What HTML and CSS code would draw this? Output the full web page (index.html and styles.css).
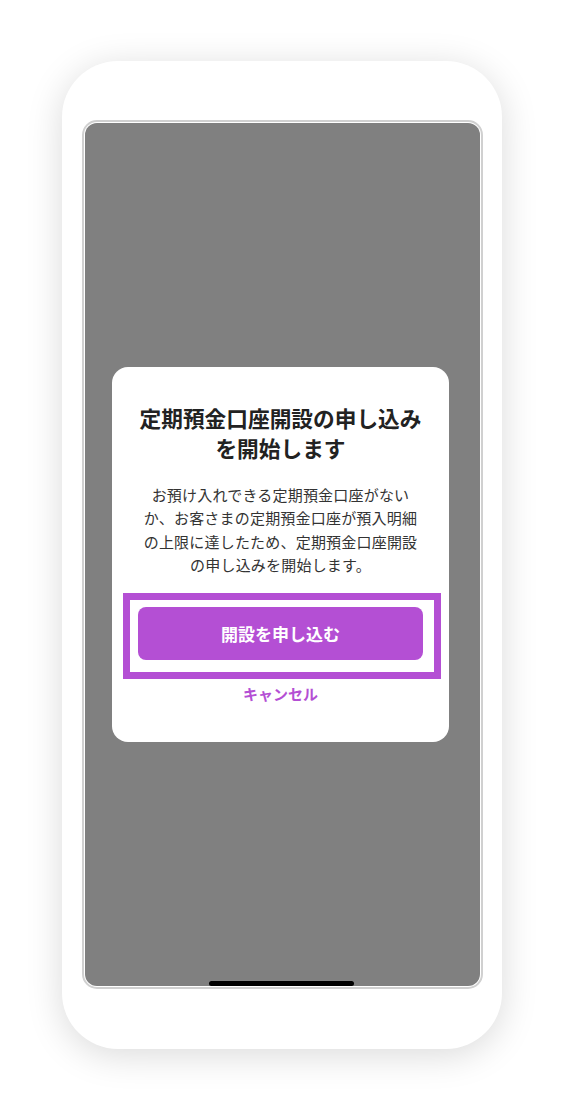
FILE: index.html
```html
<!DOCTYPE html>
<html lang="ja">
<head>
<meta charset="utf-8">
<title>定期預金口座開設</title>
<link rel="stylesheet" href="styles.css">
</head>
<body>
<div class="phone">
  <div class="bezel">
    <div class="screen">
      <div class="dialog">
        <h1 class="title">定期預金口座開設の申し込みを開始します</h1>
        <p class="message">お預け入れできる定期預金口座がないか、お客さまの定期預金口座が預入明細の上限に達したため、定期預金口座開設の申し込みを開始します。</p>
        <div class="highlight">
          <button class="primary">開設を申し込む</button>
        </div>
        <button class="cancel">キャンセル</button>
      </div>
      <div class="home-indicator"></div>
    </div>
  </div>
</div>
</body>
</html>
```

FILE: styles.css
```css
* { box-sizing: border-box; }
html, body { margin: 0; padding: 0; background: #ffffff; }
body {
  font-family: "Noto Sans CJK JP", "Noto Sans", sans-serif;
  padding: 61px 0 60px 62px;
  min-height: 1109px;
}
.phone {
  width: 440px;
  height: 988px;
  background: #ffffff;
  border-radius: 56px;
  box-shadow: 0 6px 36px rgba(0, 0, 0, 0.15);
  padding: 59px 0 0 20px;
}
.bezel {
  width: 401px;
  height: 869px;
  border: 2px solid #d0d0d0;
  border-radius: 15px;
  padding: 1px;
  background: #ffffff;
}
.screen {
  position: relative;
  width: 100%;
  height: 100%;
  background: #808080;
  border-radius: 12px;
  display: flex;
  align-items: center;
  justify-content: center;
}
.dialog {
  width: 337px;
  background: #ffffff;
  border-radius: 16px;
  padding: 36px 26px 38px;
  display: flex;
  flex-direction: column;
  align-items: center;
  margin-left: -4px;
}
.title {
  margin: 0;
  font-size: 21.7px;
  line-height: 30px;
  font-weight: 700;
  color: #222222;
  text-align: center;
}
.message {
  margin: 20px 0 0;
  font-size: 15px;
  line-height: 23.3px;
  color: #333333;
  text-align: center;
  letter-spacing: 0.2px;
}
.highlight {
  align-self: stretch;
  margin: 17px -18px 0 -15px;
  border: 7px solid #b44fd4;
  padding: 7px 11px 12px 8px;
}
.primary {
  display: block;
  width: 100%;
  height: 53px;
  border: none;
  border-radius: 8px;
  background: #b44fd4;
  color: #ffffff;
  font-family: inherit;
  font-size: 17px;
  font-weight: 700;
  padding: 0;
}
.cancel {
  margin-top: 5px;
  border: none;
  background: none;
  padding: 0;
  font-family: inherit;
  font-size: 15px;
  line-height: 20px;
  font-weight: 700;
  color: #b44fd4;
}
.home-indicator {
  position: absolute;
  left: 50%;
  bottom: 0;
  width: 145px;
  height: 5px;
  margin-left: -74px;
  background: #000000;
  border-radius: 3px;
}
```
